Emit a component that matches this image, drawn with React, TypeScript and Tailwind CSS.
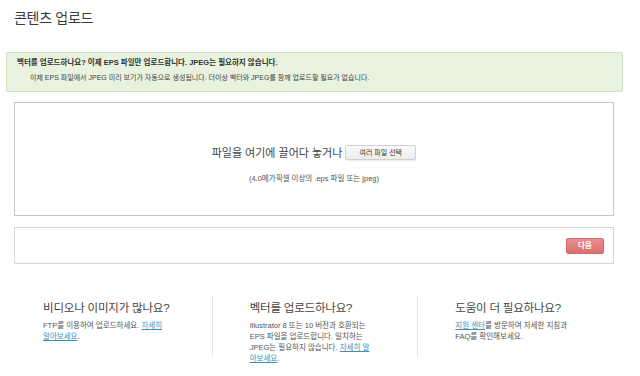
import React from "react";

const font = { fontFamily: '"Liberation Sans", "Noto Sans CJK KR", sans-serif' };

function HelpColumn({
  title,
  children,
  divider,
}: {
  title: string;
  children: React.ReactNode;
  divider?: boolean;
}) {
  return (
    <div className={`h-[62px] pl-[37px] pr-[42px] pt-[6px] ${divider ? "border-l border-[#e6e6e6]" : ""}`}>
      <div className="text-[11.5px] leading-[14px] text-[#444] tracking-[-0.2px]">{title}</div>
      <div className="mt-[5px] text-[7.5px] leading-[11px] text-[#555]">{children}</div>
    </div>
  );
}

const linkCls = "text-[#3d8fb8] underline underline-offset-[1px]";

export default function App() {
  return (
    <div style={font} className="w-[640px] h-[376px] bg-white overflow-hidden text-[#333]">
      <div className="pt-[9px] pl-[14px] text-[14px] leading-[18px] text-[#3a3a3a] tracking-[-0.3px]">
        콘텐츠 업로드
      </div>

      {/* info banner */}
      <div className="mt-[25px] ml-[6px] w-[617px] h-[40px] rounded-[2px] border border-[#d2e4c2] bg-[#e8f2df] pl-[10px] pt-[4px]">
        <div className="text-[7.5px] leading-[12px] font-bold text-[#333]">
          벡터를 업로드하나요? 이제 EPS 파일만 업로드합니다. JPEG는 필요하지 않습니다.
        </div>
        <div className="mt-[3px] pl-[13px] text-[7px] leading-[12px] text-[#444]">
          이제 EPS 파일에서 JPEG 미리 보기가 자동으로 생성됩니다. 더이상 벡터와 JPEG를 함께 업로드할 필요가 없습니다.
        </div>
      </div>

      {/* drop zone */}
      <div className="mt-[10px] ml-[14px] w-[600px] h-[114px] border border-[#c4c4c4] flex flex-col items-center pt-[42px]">
        <div className="flex items-center gap-[3px]">
          <span className="text-[11px] leading-[14px] text-[#444]">파일을 여기에 끌어다 놓거나</span>
          <button className="w-[71px] h-[15px] rounded-[2px] border border-[#d0d0d0] bg-gradient-to-b from-[#fafafa] to-[#ececec] text-[7px] leading-[13px] text-[#333] shadow-[0_1px_1px_rgba(0,0,0,0.08)]">
            여러 파일 선택
          </button>
        </div>
        <div className="mt-[14px] text-[7.5px] leading-[10px] text-[#555]">
          (4.0메가픽셀 이상의 .eps 파일 또는 jpeg)
        </div>
      </div>

      {/* action bar */}
      <div className="mt-[11px] ml-[14px] w-[600px] h-[37px] border border-[#d6d6d6] flex items-center justify-end pr-[9px]">
        <button className="w-[38px] h-[16px] rounded-[2px] border border-[#d86a6a] bg-gradient-to-b from-[#ec8c8c] to-[#d96f6f] text-[7.5px] leading-[14px] font-bold text-white">
          다음
        </button>
      </div>

      {/* help columns */}
      <div className="mt-[31px] ml-[6px] w-[617px] grid grid-cols-3">
        <HelpColumn title="비디오나 이미지가 많나요?">
          FTP를 이용하여 업로드하세요. <span className={linkCls}>자세히 알아보세요</span>.
        </HelpColumn>
        <HelpColumn title="벡터를 업로드하나요?" divider>
          Illustrator 8 또는 10 버전과 호환되는 EPS 파일을 업로드합니다. 일치하는 JPEG는 필요하지 않습니다.{" "}
          <span className={linkCls}>자세히 알아보세요</span>.
        </HelpColumn>
        <HelpColumn title="도움이 더 필요하나요?" divider>
          <span className={linkCls}>지원 센터</span>를 방문하여 자세한 지침과 FAQ를 확인해보세요.
        </HelpColumn>
      </div>
    </div>
  );
}
